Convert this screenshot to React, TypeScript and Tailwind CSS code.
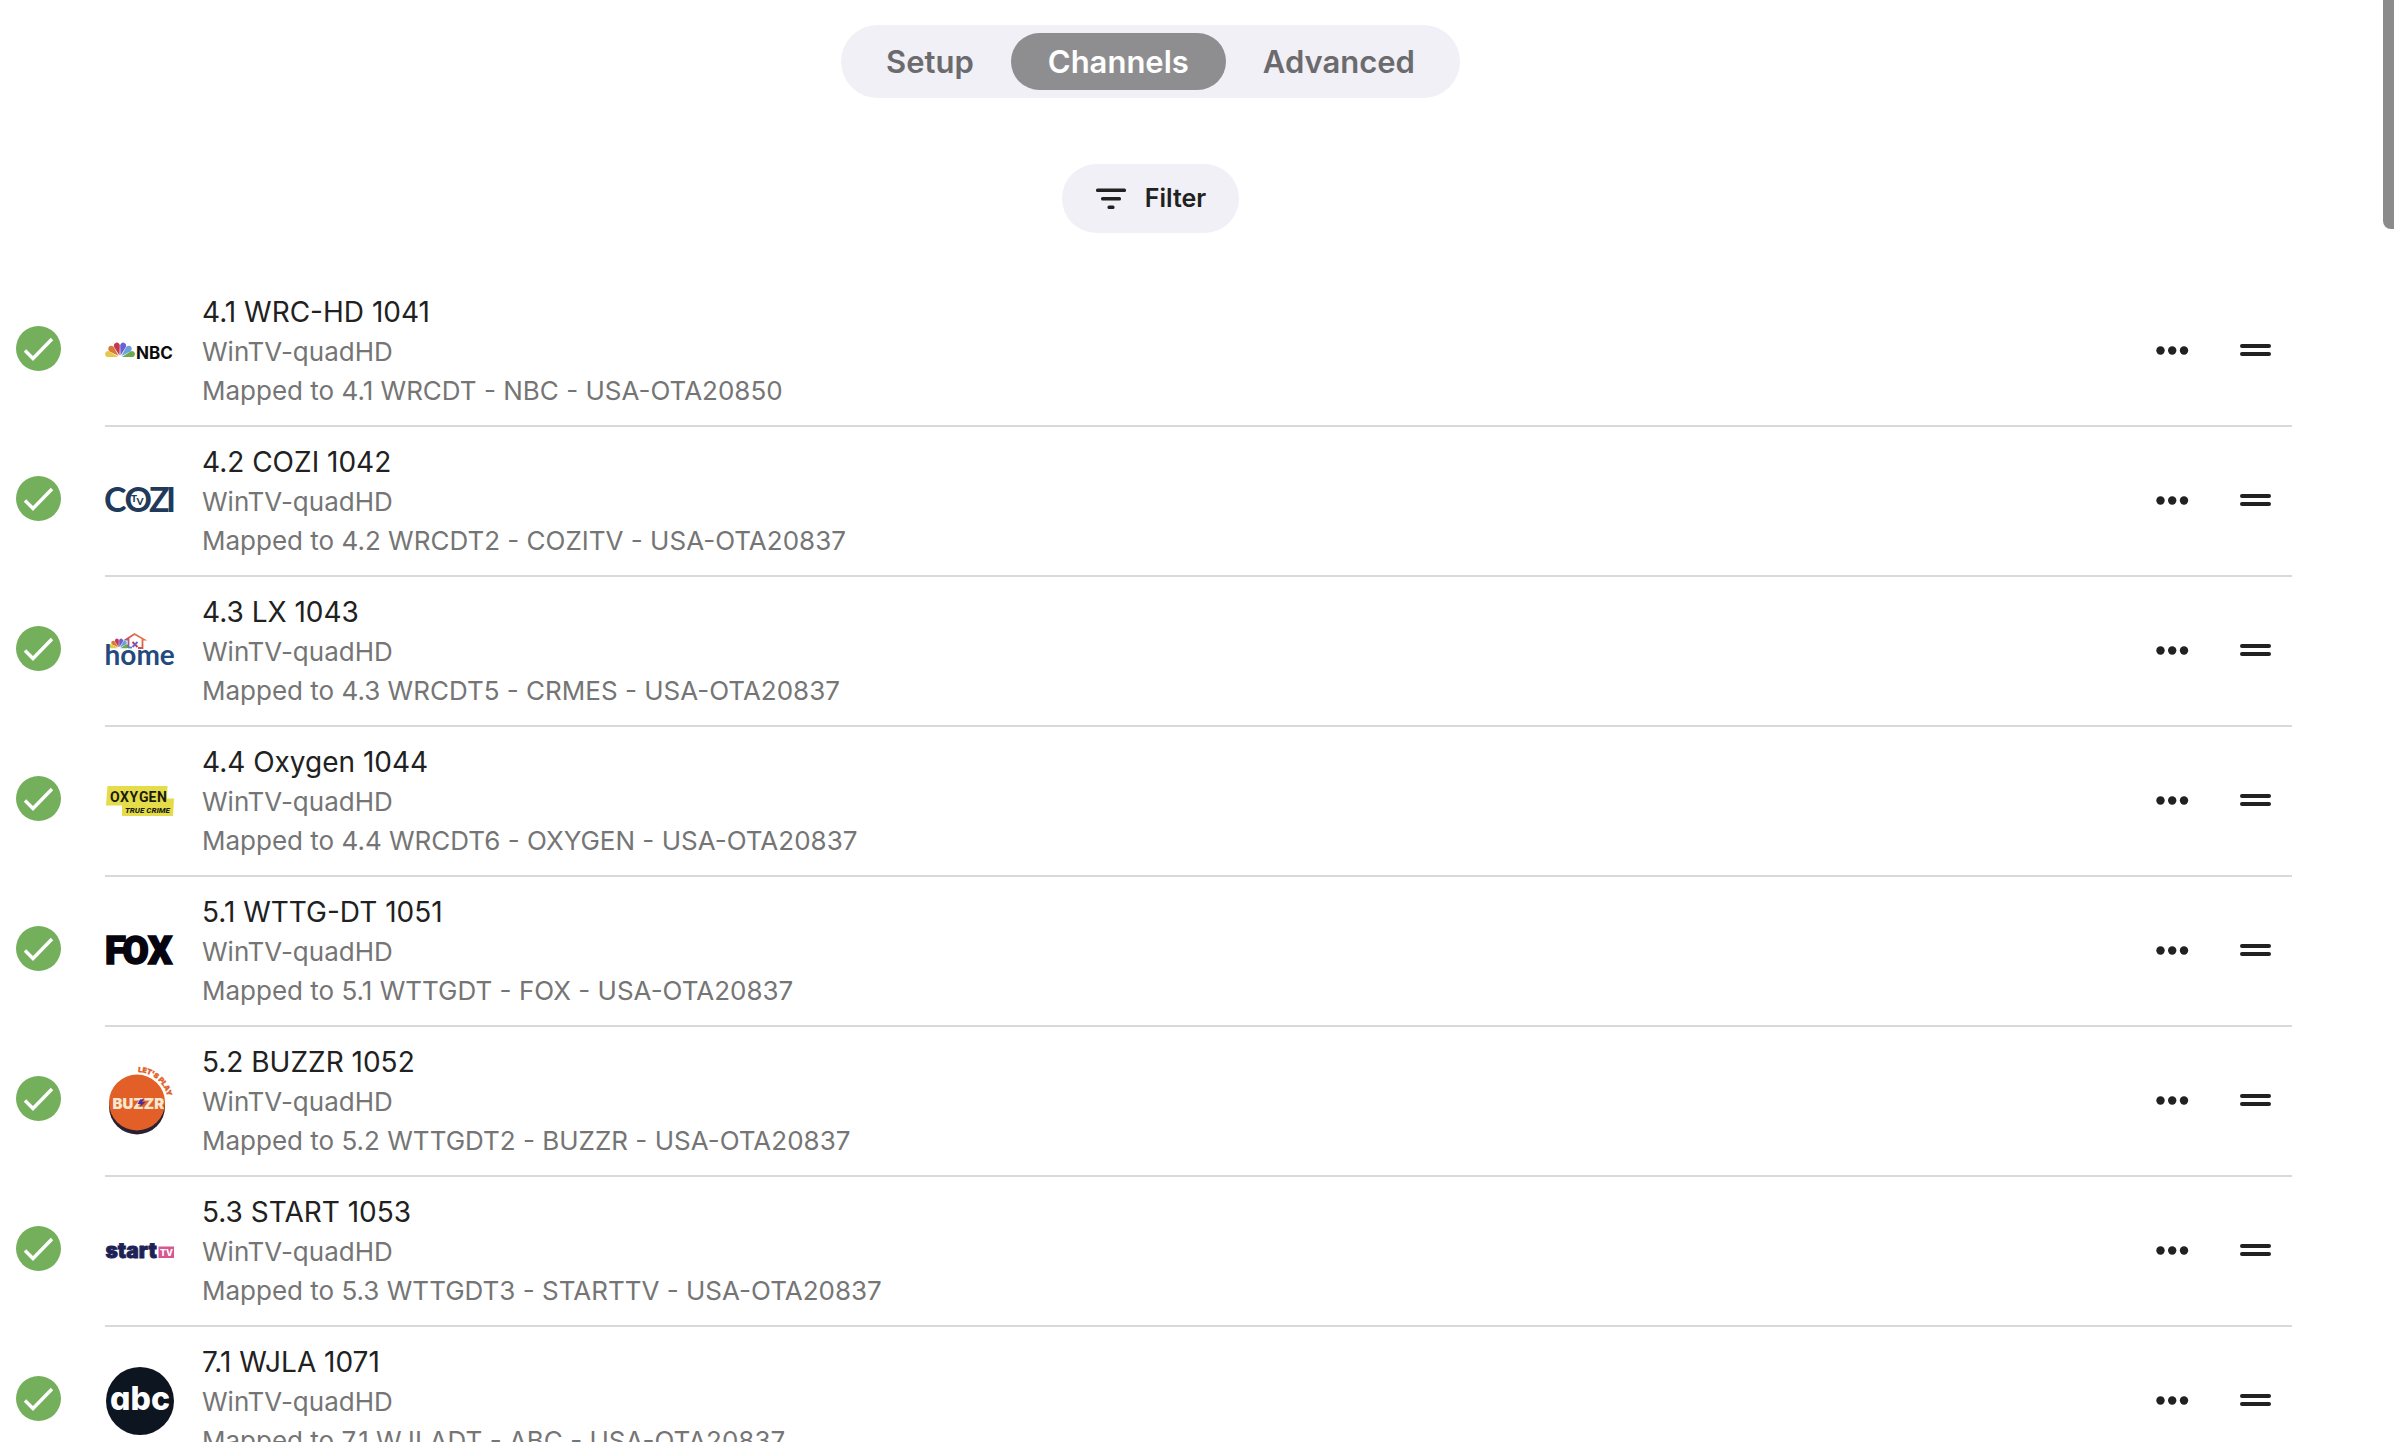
import React, { useState } from "react";

interface Channel {
  id: string;
  title: string;
  source: string;
  mapping: string;
  logo: React.ReactNode;
}

const PETALS = [
  { angle: -74, color: "#e6c84c" },
  { angle: -45, color: "#d67c3a" },
  { angle: -15, color: "#c4374e" },
  { angle: 15, color: "#6a5fd2" },
  { angle: 45, color: "#6b9fde" },
  { angle: 74, color: "#6caa4c" },
];

const Peacock: React.FC<{ transform: string }> = ({ transform }) => (
  <g transform={transform}>
    {PETALS.map((petal) => (
      <path
        key={petal.angle}
        d="M0 -2 L-2.9 -11.5 A3 3.1 0 1 1 2.9 -11.5 Z"
        fill={petal.color}
        transform={`rotate(${petal.angle})`}
      />
    ))}
  </g>
);

const Logo: React.FC<{ label: string; children: React.ReactNode }> = ({
  label,
  children,
}) => (
  <svg
    viewBox="0 0 68 68"
    role="img"
    aria-label={label}
    className="size-[68px] shrink-0 overflow-visible"
  >
    {children}
  </svg>
);

const NbcLogo = () => (
  <Logo label="NBC">
    <Peacock transform="translate(14 40.5)" />
    <text x="30" y="41.5" fontFamily="Inter, sans-serif" fontWeight="700" fontSize="17" fill="#0b0b0b">
      NBC
    </text>
  </Logo>
);

const CoziLogo = () => (
  <Logo label="Cozi TV">
    <g fill="#1f3a5a" fontFamily="Lato, sans-serif">
      <text x="-2 18.5 43 60" y="45" fontWeight="700" fontSize="34">
        COZI
      </text>
      <text x="25 30.5" y="35 38" fontWeight="900" fontSize="10">
        TV
      </text>
    </g>
  </Logo>
);

const HomeLogo = () => (
  <Logo label="LX Home">
    <defs>
      <linearGradient id="house" x1="0" y1="1" x2="1" y2="0">
        <stop offset="0" stopColor="#6a5fcf" />
        <stop offset="0.45" stopColor="#d6524f" />
        <stop offset="1" stopColor="#e88b45" />
      </linearGradient>
    </defs>
    <Peacock transform="translate(13 31.5) scale(0.66)" />
    <path
      d="M22.5 31 V22.5 H20 L28.5 17 L38 22.5 H36.5 V31 H32"
      fill="none"
      stroke="url(#house)"
      strokeWidth="1.8"
    />
    <path d="M22 30.5 H26" stroke="#4a86c8" strokeWidth="1.8" />
    <path d="M26.5 25 L31.5 30" stroke="#c0394f" strokeWidth="1.8" />
    <path d="M31.5 25 L26.5 30" stroke="#6a5fcf" strokeWidth="1.8" />
    <text x="-1.5" y="48" fontFamily="Lato, sans-serif" fontWeight="700" fontSize="28" fill="#23497e">
      home
    </text>
  </Logo>
);

const OxygenLogo = () => (
  <Logo label="Oxygen True Crime">
    <path d="M1.5 19 H61.5 L61 31.5 H68 L67 49 H16 V38.5 H0 Z" fill="#e4dc48" />
    <g fill="#1b1b12" fontFamily="Roboto, sans-serif">
      <text x="4 14 23.5 33 42.5 51" y="34.5" fontWeight="700" fontSize="14">
        OXYGEN
      </text>
      <text x="19" y="46" fontWeight="800" fontSize="8" fontStyle="italic">
        TRUE CRIME
      </text>
    </g>
  </Logo>
);

const FoxLogo = () => (
  <Logo label="Fox">
    <text
      x="-1 16.5 42"
      y="47"
      fontFamily="Roboto, sans-serif"
      fontWeight="900"
      fontSize="38"
      fill="#05040f"
      stroke="#05040f"
      strokeWidth="1.5"
    >
      FOX
    </text>
  </Logo>
);

const BuzzrLogo = () => (
  <Logo label="Buzzr">
    <circle cx="31" cy="39.5" r="28" fill="#2a2030" />
    <circle cx="31" cy="35.5" r="28" fill="#e25f28" />
    <text x="6.5" y="41.5" fontFamily="Inter, sans-serif" fontWeight="900" fontSize="15" fill="#f6e8cf">
      BUZZR
    </text>
    <path d="M34 32.5 L31.5 37 H35 L34 40 L39.5 35 H36 L38 32 Z" fill="#4a2f9c" />
    <path id="buzzrArc" d="M32 5 A31 31 0 0 1 62 38" fill="none" />
    <text fontFamily="Inter, sans-serif" fontWeight="900" fontSize="7" fill="#e25f28" stroke="#e25f28" strokeWidth="0.4">
      <textPath href="#buzzrArc">LET'S PLAY</textPath>
    </text>
  </Logo>
);

const StartLogo = () => (
  <Logo label="Start TV">
    <text
      x="-0.5"
      y="40.5"
      fontFamily="Inter, sans-serif"
      fontWeight="900"
      fontSize="21"
      fill="#1d2256"
      stroke="#1d2256"
      strokeWidth="0.8"
    >
      start
    </text>
    <rect x="52.5" y="29.5" width="15.5" height="11.5" fill="#d8578f" />
    <text x="54" y="38.7" fontFamily="Inter, sans-serif" fontWeight="800" fontSize="9" fill="#fff">
      TV
    </text>
  </Logo>
);

const AbcLogo = () => (
  <Logo label="ABC">
    <circle cx="34" cy="34" r="34" fill="#0d1520" />
    <text
      x="34"
      y="43"
      textAnchor="middle"
      className="[font-feature-settings:'cv11']"
      fontFamily="Inter, sans-serif"
      fontWeight="800"
      fontSize="32"
      fill="#fff"
    >
      abc
    </text>
  </Logo>
);

const channels: Channel[] = [
  {
    id: "4.1",
    title: "4.1 WRC-HD 1041",
    source: "WinTV-quadHD",
    mapping: "Mapped to 4.1 WRCDT - NBC - USA-OTA20850",
    logo: <NbcLogo />,
  },
  {
    id: "4.2",
    title: "4.2 COZI 1042",
    source: "WinTV-quadHD",
    mapping: "Mapped to 4.2 WRCDT2 - COZITV - USA-OTA20837",
    logo: <CoziLogo />,
  },
  {
    id: "4.3",
    title: "4.3 LX 1043",
    source: "WinTV-quadHD",
    mapping: "Mapped to 4.3 WRCDT5 - CRMES - USA-OTA20837",
    logo: <HomeLogo />,
  },
  {
    id: "4.4",
    title: "4.4 Oxygen 1044",
    source: "WinTV-quadHD",
    mapping: "Mapped to 4.4 WRCDT6 - OXYGEN - USA-OTA20837",
    logo: <OxygenLogo />,
  },
  {
    id: "5.1",
    title: "5.1 WTTG-DT 1051",
    source: "WinTV-quadHD",
    mapping: "Mapped to 5.1 WTTGDT - FOX - USA-OTA20837",
    logo: <FoxLogo />,
  },
  {
    id: "5.2",
    title: "5.2 BUZZR 1052",
    source: "WinTV-quadHD",
    mapping: "Mapped to 5.2 WTTGDT2 - BUZZR - USA-OTA20837",
    logo: <BuzzrLogo />,
  },
  {
    id: "5.3",
    title: "5.3 START 1053",
    source: "WinTV-quadHD",
    mapping: "Mapped to 5.3 WTTGDT3 - STARTTV - USA-OTA20837",
    logo: <StartLogo />,
  },
  {
    id: "7.1",
    title: "7.1 WJLA 1071",
    source: "WinTV-quadHD",
    mapping: "Mapped to 7.1 WJLADT - ABC - USA-OTA20837",
    logo: <AbcLogo />,
  },
];

const tabs = ["Setup", "Channels", "Advanced"];

const ChannelRow: React.FC<{ channel: Channel }> = ({ channel }) => {
  const [enabled, setEnabled] = useState(true);
  const inputId = `channel-${channel.id}`;

  return (
    <li className="flex items-center">
      <span className="mr-11 mb-2 grid size-[45px] shrink-0 place-items-center">
        <input
          id={inputId}
          type="checkbox"
          checked={enabled}
          onChange={() => setEnabled(!enabled)}
          className="col-start-1 row-start-1 size-[45px] appearance-none rounded-full bg-gray-300 checked:bg-[#74af5b]"
        />
        <svg
          viewBox="0 0 45 45"
          className="pointer-events-none col-start-1 row-start-1 size-[45px]"
          fill="none"
          stroke="#fff"
          strokeWidth="3.4"
        >
          <path d="M9 24.5 L17 32.5 L36 13" />
        </svg>
      </span>

      <div className="flex min-w-0 grow items-center border-b-2 border-[#d9d9d9] py-[15px] pr-3 pl-px">
        {channel.logo}
        <div className="ml-7 min-w-0 grow text-[26px] leading-[39px] text-[#757575]">
          <label htmlFor={inputId} className="block text-[28px] leading-[40px] text-[#212121]">
            {channel.title}
          </label>
          <p>{channel.source}</p>
          <p>{channel.mapping}</p>
        </div>
        <button type="button" aria-label="More options" className="grid size-12 shrink-0 place-items-center">
          <svg viewBox="0 0 48 48" className="size-12" fill="#212121">
            <circle cx="12.5" cy="23.5" r="4.2" />
            <circle cx="24.2" cy="23.5" r="4.2" />
            <circle cx="36" cy="23.5" r="4.2" />
          </svg>
        </button>
        <button type="button" aria-label="Reorder" className="ml-9 grid size-12 shrink-0 place-items-center">
          <svg viewBox="0 0 48 48" className="size-12" fill="#212121">
            <rect x="8" y="17" width="31" height="4" rx="2" />
            <rect x="8" y="25" width="31" height="4" rx="2" />
          </svg>
        </button>
      </div>
    </li>
  );
};

const App: React.FC = () => {
  const [activeTab, setActiveTab] = useState("Channels");

  return (
    <div className="relative h-screen overflow-hidden bg-white font-['Inter',sans-serif]">
      <main className="pt-[25px] pr-[93px]">
        <nav className="flex justify-center">
          <div className="flex rounded-full bg-[#f1f0f6] p-2">
            {tabs.map((tab) => (
              <button
                key={tab}
                type="button"
                onClick={() => setActiveTab(tab)}
                className={
                  tab === activeTab
                    ? "rounded-full bg-[#8e8e90] px-[37px] text-[31px] leading-[57px] font-semibold text-white"
                    : "rounded-full px-[37px] text-[31px] leading-[57px] font-semibold text-[#6b6b6e]"
                }
              >
                {tab}
              </button>
            ))}
          </div>
        </nav>

        <div className="mt-[66px] flex justify-center">
          <button
            type="button"
            className="flex items-center gap-[18px] rounded-full bg-[#f1f0f6] px-[33px] text-[25px] leading-[69px] font-semibold text-[#212121]"
          >
            <svg viewBox="0 0 32 32" className="size-8" fill="#212121">
              <rect x="1" y="5.5" width="30" height="3.6" rx="1.5" />
              <rect x="6" y="14" width="20" height="3.6" rx="1.5" />
              <rect x="12.5" y="22.4" width="7" height="3.6" rx="1.5" />
            </svg>
            Filter
          </button>
        </div>

        <ul className="mt-11 pr-[9px] pl-4">
          {channels.map((channel) => (
            <ChannelRow key={channel.id} channel={channel} />
          ))}
        </ul>
      </main>

      {/* Scroll position indicator */}
      <div className="absolute top-0 right-0 h-[229px] w-[11px] rounded-bl-lg bg-[#8b8b8b]" />
    </div>
  );
};

export default App;
